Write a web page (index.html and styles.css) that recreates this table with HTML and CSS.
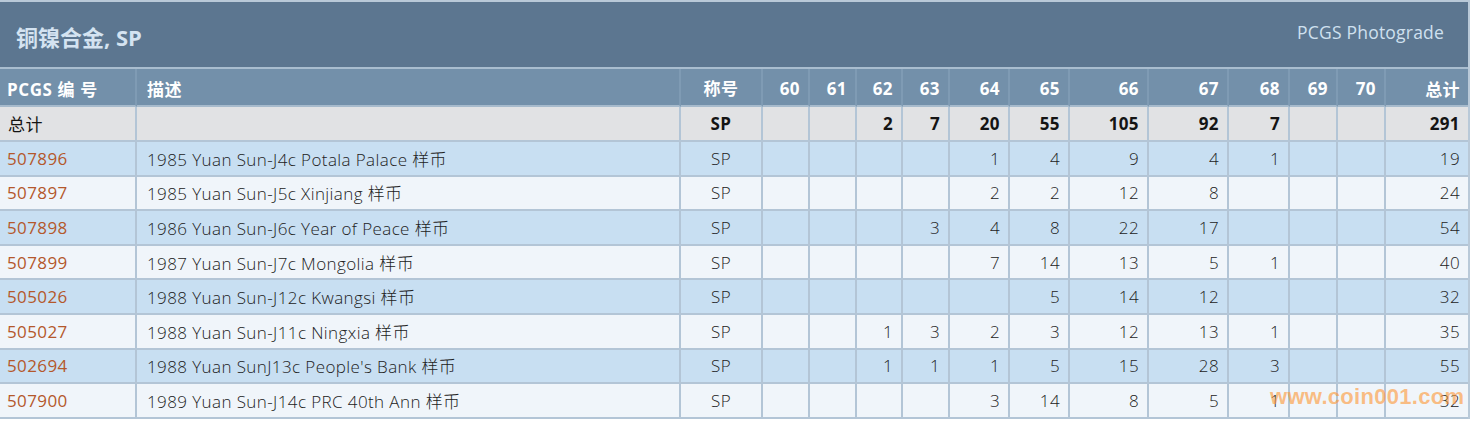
FILE: index.html
```html
<!DOCTYPE html>
<html lang="zh">
<head>
<meta charset="utf-8">
<title>铜镍合金, SP</title>
<link rel="stylesheet" href="styles.css">
</head>
<body>
<div class="panel">
  <div class="title-bar">
    <h1 class="title">铜镍合金, SP</h1>
    <span class="photograde">PCGS Photograde</span>
  </div>
  <table class="pop">
    <colgroup>
      <col style="width:137px"><col style="width:544px"><col style="width:82px">
      <col style="width:47px"><col style="width:47px"><col style="width:46px"><col style="width:47px">
      <col style="width:60px"><col style="width:60px"><col style="width:79px"><col style="width:80px">
      <col style="width:61px"><col style="width:48px"><col style="width:48px"><col style="width:82px">
    </colgroup>
    <thead>
      <tr class="head">
        <th class="l">PCGS 编 号</th><th class="l">描述</th><th class="c">称号</th>
        <th>60</th><th>61</th><th>62</th><th>63</th><th>64</th><th>65</th><th>66</th><th>67</th><th>68</th><th>69</th><th>70</th><th>总计</th>
      </tr>
    </thead>
    <tbody>
      <tr class="total">
        <td class="l cjk">总计</td><td></td><td class="c b">SP</td>
        <td></td><td></td><td class="b">2</td><td class="b">7</td><td class="b">20</td><td class="b">55</td><td class="b">105</td><td class="b">92</td><td class="b">7</td><td></td><td></td><td class="b">291</td>
      </tr>
      <tr class="odd">
        <td class="l num">507896</td><td class="l">1985 Yuan Sun-J4c Potala Palace 样币</td><td class="c">SP</td>
        <td></td><td></td><td></td><td></td><td>1</td><td>4</td><td>9</td><td>4</td><td>1</td><td></td><td></td><td>19</td>
      </tr>
      <tr class="even">
        <td class="l num">507897</td><td class="l">1985 Yuan Sun-J5c Xinjiang 样币</td><td class="c">SP</td>
        <td></td><td></td><td></td><td></td><td>2</td><td>2</td><td>12</td><td>8</td><td></td><td></td><td></td><td>24</td>
      </tr>
      <tr class="odd">
        <td class="l num">507898</td><td class="l">1986 Yuan Sun-J6c Year of Peace 样币</td><td class="c">SP</td>
        <td></td><td></td><td></td><td>3</td><td>4</td><td>8</td><td>22</td><td>17</td><td></td><td></td><td></td><td>54</td>
      </tr>
      <tr class="even">
        <td class="l num">507899</td><td class="l">1987 Yuan Sun-J7c Mongolia 样币</td><td class="c">SP</td>
        <td></td><td></td><td></td><td></td><td>7</td><td>14</td><td>13</td><td>5</td><td>1</td><td></td><td></td><td>40</td>
      </tr>
      <tr class="odd">
        <td class="l num">505026</td><td class="l">1988 Yuan Sun-J12c Kwangsi 样币</td><td class="c">SP</td>
        <td></td><td></td><td></td><td></td><td></td><td>5</td><td>14</td><td>12</td><td></td><td></td><td></td><td>32</td>
      </tr>
      <tr class="even">
        <td class="l num">505027</td><td class="l">1988 Yuan Sun-J11c Ningxia 样币</td><td class="c">SP</td>
        <td></td><td></td><td>1</td><td>3</td><td>2</td><td>3</td><td>12</td><td>13</td><td>1</td><td></td><td></td><td>35</td>
      </tr>
      <tr class="odd">
        <td class="l num">502694</td><td class="l">1988 Yuan SunJ13c People's Bank 样币</td><td class="c">SP</td>
        <td></td><td></td><td>1</td><td>1</td><td>1</td><td>5</td><td>15</td><td>28</td><td>3</td><td></td><td></td><td>55</td>
      </tr>
      <tr class="even">
        <td class="l num">507900</td><td class="l">1989 Yuan Sun-J14c PRC 40th Ann 样币</td><td class="c">SP</td>
        <td></td><td></td><td></td><td></td><td>3</td><td>14</td><td>8</td><td>5</td><td>1</td><td></td><td></td><td>32</td>
      </tr>
    </tbody>
  </table>
  <span class="watermark">www.coin001.com</span>
</div>
</body>
</html>
```
FILE: styles.css
```css
html, body {
  margin: 0;
  padding: 0;
  background: #ffffff;
}
body {
  font-family: "Open Sans", "Noto Sans CJK SC", sans-serif;
}
.panel {
  position: relative;
  width: 1468px;
  border-top: 2px solid #b9c9d8;
  border-right: 2px solid #b9c9d8;
}
.title-bar {
  display: flex;
  justify-content: space-between;
  align-items: center;
  height: 67px;
  background: #5c7690;
  border-bottom: 2px solid #a9bdcf;
  box-sizing: border-box;
  padding: 0 24px 0 16px;
}
.title {
  margin: 0;
  font-size: 22px;
  font-weight: 700;
  color: #d4e3f1;
  padding-top: 3px;
}
.photograde {
  font-size: 17.5px;
  letter-spacing: 0.2px;
  color: #cfe0ef;
  padding-bottom: 6px;
}
.pop {
  border-collapse: separate;
  border-spacing: 0;
  table-layout: fixed;
  width: 1468px;
}
.pop th, .pop td {
  border-right: 2px solid #b3c5d6;
  border-bottom: 2px solid #b3c5d6;
  padding: 0 8px 0 6px;
  text-align: right;
  white-space: nowrap;
  font-size: 17px;
  letter-spacing: 0.4px;
  box-sizing: border-box;
}
.pop th:last-child, .pop td:last-child {
  border-right: none;
}
.pop .l { text-align: left; }
.pop .c { text-align: center; padding: 0; }
.head th {
  height: 38px;
  background: #7390aa;
  color: #ffffff;
  font-weight: 700;
  border-right-color: #7f9bb4;
  border-bottom-color: #a6bacc;
  padding-top: 2px;
}
.head th.l { padding-left: 7px; letter-spacing: 0.6px; }
.head th:nth-child(2) { padding-left: 10px; }
.pop .total td {
  height: 35px;
  background: #e1e2e4;
  color: #141414;
}
.pop .total .b { font-weight: 700; }
.pop .total .cjk { padding-left: 8px; }
.pop tr.odd td, .pop tr.even td {
  height: 34.6px;
  color: #222222;
  font-weight: 300;
}
.pop tr.odd td { background: #c8dff2; }
.pop tr.even td { background: #f0f5fa; }
.pop tr td.num { color: #b4582b; padding-left: 7px; font-weight: 400; }
.pop tbody td:nth-child(2) { padding-left: 10px; }
.watermark {
  position: absolute;
  left: 1270px;
  top: 382px;
  font-family: "Liberation Sans", Arial, sans-serif;
  font-weight: 700;
  font-size: 22px;
  color: rgba(255, 150, 50, 0.6);
  letter-spacing: 0.3px;
  pointer-events: none;
}
```
